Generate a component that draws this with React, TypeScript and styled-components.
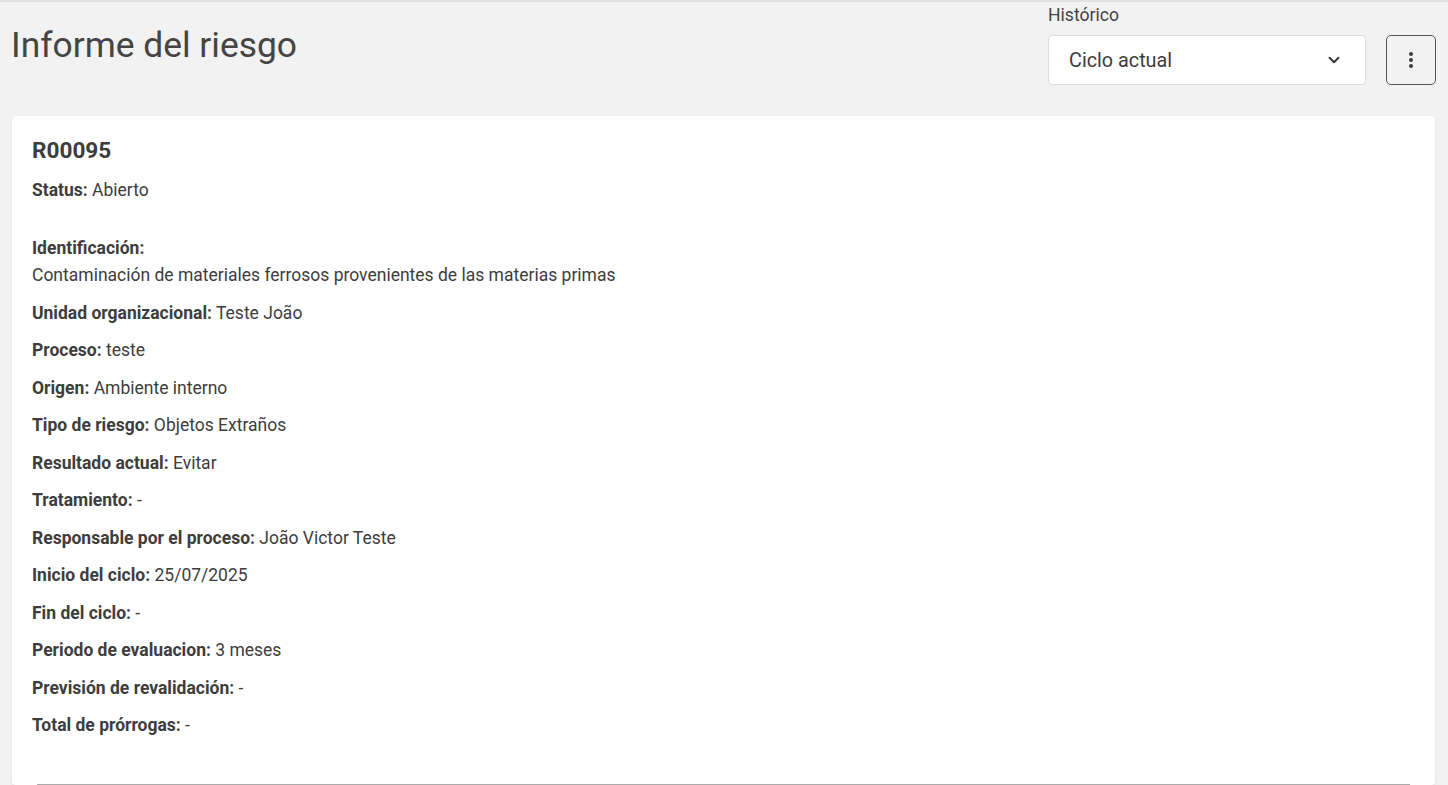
import React from "react";
import styled, { createGlobalStyle } from "styled-components";
import { ChevronDown } from "lucide-react";

const GlobalStyle = createGlobalStyle`
  html, body {
    margin: 0;
    padding: 0;
    background: #f2f2f2;
    font-family: Roboto, "Liberation Sans", Arial, sans-serif;
    color: #3d3d3d;
  }
  * { box-sizing: border-box; }
`;

const Page = styled.div`
  min-height: 785px;
  border-top: 2px solid #e2e2e2;
  padding: 0 13px 0 12px;
`;

const Header = styled.header`
  display: flex;
  justify-content: space-between;
  align-items: flex-start;
  height: 114px;
`;

const Title = styled.h1`
  margin: 24px 0 0 -1px;
  font-size: 35.4px;
  font-weight: 400;
  line-height: 38px;
  color: #444;
`;

const Controls = styled.div`
  display: flex;
  align-items: flex-end;
  gap: 20px;
  padding-top: 4px;
  margin-right: -1px;
`;

const Field = styled.div`
  display: flex;
  flex-direction: column;
`;

const FieldLabel = styled.label`
  font-size: 17.6px;
  line-height: 19px;
  color: #444;
  margin-bottom: 10px;
`;

const Select = styled.div`
  width: 318px;
  height: 50px;
  background: #fff;
  border: 1px solid #dcdcdc;
  border-radius: 4px;
  display: flex;
  align-items: center;
  justify-content: space-between;
  padding: 0 22px 0 20px;
  font-size: 19.8px;
  color: #3d3d3d;
`;

const IconButton = styled.button`
  width: 50px;
  height: 50px;
  border: 1px solid #555;
  border-radius: 5px;
  background: transparent;
  display: flex;
  align-items: center;
  justify-content: center;
  padding: 0;
  color: #3d3d3d;
  cursor: pointer;
`;

const Card = styled.section`
  background: #fff;
  border-radius: 4px;
  box-shadow: 0 1px 3px rgba(0, 0, 0, 0.08);
  padding: 20px 20px 0;
  min-height: 669px;
`;

const Code = styled.h2`
  margin: 0 0 12px;
  font-size: 22.6px;
  font-weight: 700;
  line-height: 30px;
  color: #3d3d3d;
`;

const Row = styled.div<{ $gap?: number }>`
  font-size: 17.5px;
  line-height: 24px;
  margin-bottom: ${(p) => p.$gap ?? 13.5}px;
  color: #3d3d3d;
`;

const Label = styled.strong<{ $block?: boolean }>`
  font-weight: 700;
  display: ${(p) => (p.$block ? "block" : "inline")};
  margin-bottom: ${(p) => (p.$block ? "3px" : "0")};
`;

const Divider = styled.hr`
  margin: 47px 5px 0;
  border: none;
  border-top: 1px solid #aaa;
`;

const fields: [string, string][] = [
  ["Unidad organizacional", "Teste João"],
  ["Proceso", "teste"],
  ["Origen", "Ambiente interno"],
  ["Tipo de riesgo", "Objetos Extraños"],
  ["Resultado actual", "Evitar"],
  ["Tratamiento", "-"],
  ["Responsable por el proceso", "João Victor Teste"],
  ["Inicio del ciclo", "25/07/2025"],
  ["Fin del ciclo", "-"],
  ["Periodo de evaluacion", "3 meses"],
  ["Previsión de revalidación", "-"],
  ["Total de prórrogas", "-"],
];

const Kebab = () => (
  <svg width="6" height="18" viewBox="0 0 6 18" fill="currentColor">
    <circle cx="3" cy="3" r="2" />
    <circle cx="3" cy="9" r="2" />
    <circle cx="3" cy="15" r="2" />
  </svg>
);

export default function App() {
  return (
    <>
      <GlobalStyle />
      <Page>
        <Header>
          <Title>Informe del riesgo</Title>
          <Controls>
            <Field>
              <FieldLabel>Histórico</FieldLabel>
              <Select>
                <span>Ciclo actual</span>
                <ChevronDown size={18} strokeWidth={2.5} color="#333" />
              </Select>
            </Field>
            <IconButton aria-label="Más opciones">
              <Kebab />
            </IconButton>
          </Controls>
        </Header>
        <Card>
          <Code>R00095</Code>
          <Row $gap={34}>
            <Label>Status:</Label> Abierto
          </Row>
          <Row>
            <Label $block>Identificación:</Label>
            Contaminación de materiales ferrosos provenientes de las materias primas
          </Row>
          {fields.map(([k, v]) => (
            <Row key={k}>
              <Label>{k}:</Label> {v}
            </Row>
          ))}
          <Divider />
        </Card>
      </Page>
    </>
  );
}
